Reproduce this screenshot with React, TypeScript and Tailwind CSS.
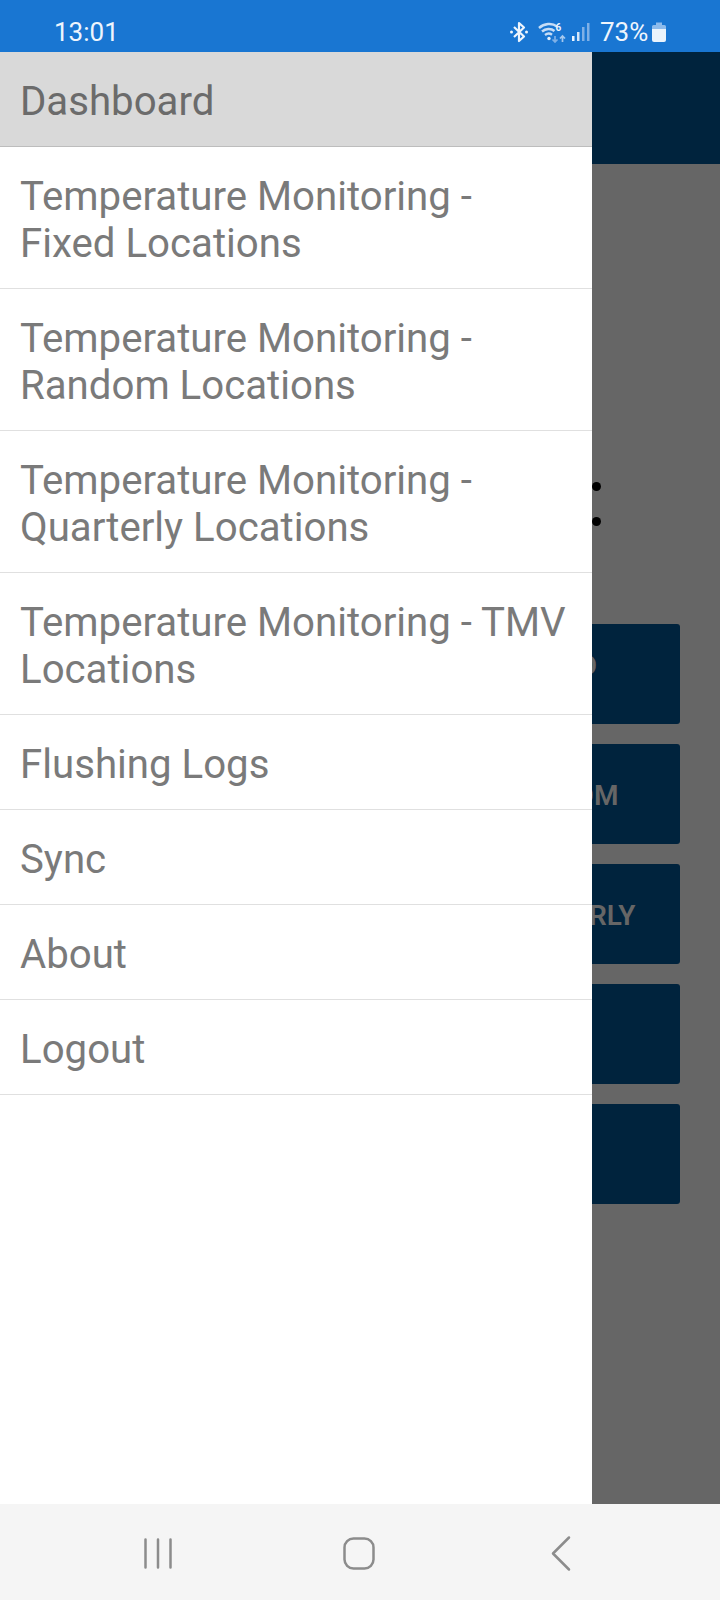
const menuItems = [
  { lines: ["Temperature Monitoring -", "Fixed Locations"] },
  { lines: ["Temperature Monitoring -", "Random Locations"] },
  { lines: ["Temperature Monitoring -", "Quarterly Locations"] },
  { lines: ["Temperature Monitoring - TMV", "Locations"] },
  { lines: ["Flushing Logs"] },
  { lines: ["Sync"] },
  { lines: ["About"] },
  { lines: ["Logout"] },
];

const backgroundButtons = [
  "TEMPERATURE MONITORING - FIXED",
  "TEMPERATURE MONITORING - RANDOM",
  "TEMPERATURE MONITORING - QUARTERLY",
  "",
  "",
];

function StatusIcons() {
  return (
    <div className="flex items-center">
      {/* bluetooth */}
      <svg width="20" height="22" viewBox="0 0 20 22" className="ml-[509px]">
        <path d="M5 6l10 9.5L10 20V2l5 4.5L5 16" fill="none" stroke="#eef5fd" strokeWidth="2.2" strokeLinejoin="round" />
        <circle cx="2.5" cy="11" r="1.5" fill="#eef5fd" />
        <circle cx="17.5" cy="11" r="1.5" fill="#eef5fd" />
      </svg>
      {/* wifi with 6 and arrows */}
      <svg width="30" height="22" viewBox="0 0 30 22" className="ml-[9px]">
        <path d="M1 7C6 2.500 14 1.500 19 5.500" fill="none" stroke="#c6ddf6" strokeWidth="2.400" />
        <path d="M4 10.500c3.500-3 9-3.500 12.500-.5" fill="none" stroke="#c6ddf6" strokeWidth="2.400" />
        <path d="M7 14c2-1.500 5-1.700 7-.2" fill="none" stroke="#c6ddf6" strokeWidth="2.400" />
        <circle cx="11" cy="17.500" r="1.700" fill="#e4effb" />
        <path d="M17 15v6M14.500 18.500l2.500 2.500 2.500-2.500" fill="none" stroke="#7fb0e6" strokeWidth="1.700" />
        <path d="M24.500 21v-6M22 17.500l2.500-2.500 2.500 2.500" fill="none" stroke="#a5c8ee" strokeWidth="1.700" />
        <text x="17.500" y="9.500" fontSize="10" fontWeight="700" fill="#eef5fd" fontFamily="Roboto, sans-serif">6</text>
      </svg>
      {/* signal */}
      <svg width="18" height="20" viewBox="0 0 18 20" className="ml-[4px]">
        <rect x="0" y="14" width="2.500" height="5" fill="#eef5fd" />
        <rect x="5" y="10" width="2.500" height="9" fill="#d6e6f8" />
        <rect x="10" y="5" width="2.500" height="14" fill="#7fb0e6" />
        <rect x="15" y="1" width="2.500" height="18" fill="#7fb0e6" />
      </svg>
      <span className="ml-[10px] text-[26px] leading-none text-[#eef5fd]">73%</span>
      {/* battery */}
      <svg width="14" height="20" viewBox="0 0 14 20" className="ml-[4px]">
        <path d="M4 0.500h6v2.500h-6z" fill="#8dbbec" />
        <path d="M1.500 3h11a1.500 1.500 0 0 1 1.500 1.500V7H0V4.500A1.500 1.500 0 0 1 1.500 3z" fill="#8dbbec" />
        <path d="M0 7h14v11a2 2 0 0 1-2 2H2a2 2 0 0 1-2-2z" fill="#eaf3fc" />
      </svg>
    </div>
  );
}

export default function App() {
  return (
    <div className="flex h-[1600px] w-[720px] flex-col overflow-hidden bg-white font-['Roboto',sans-serif] antialiased">
      <div className="relative flex h-[52px] shrink-0 items-center bg-[#1976d2] pt-[12px]">
        <span className="absolute left-[54px] text-[26px] leading-none text-[#eef5fd]">13:01</span>
        <StatusIcons />
      </div>

      <div className="relative min-h-0 flex-1 bg-[#666666]">
        {/* page behind the drawer */}
        <div className="h-[112px] bg-[#00233d]" />
        <div className="ml-[592px] mt-[318px] flex flex-col gap-[26px]">
          <div className="h-[9px] w-[9px] rounded-full bg-black" />
          <div className="h-[9px] w-[9px] rounded-full bg-black" />
        </div>
        <div className="mx-10 mt-[98px] flex flex-col gap-5">
          {backgroundButtons.map((label, i) => (
            <div
              key={i}
              className={`flex h-[100px] items-center justify-center whitespace-nowrap rounded-[3px] bg-[#00233d] text-[28px] font-semibold text-[#666666] ${i === 0 ? "pb-4" : "pt-1"}`}
            >
              {label}
            </div>
          ))}
        </div>

        {/* drawer */}
        <div className="absolute inset-y-0 left-0 w-[592px] bg-white text-[40.2px] leading-[47px] text-[#7a7a7a]">
          <div className="flex h-[95px] items-center border-b border-[#bdbdbd] bg-[#d9d9d9] px-5 pt-1 text-[#6b6b6b]">
            Dashboard
          </div>
          {menuItems.map((item) => (
            <div key={item.lines[0] + item.lines[1]} className="border-b border-[#e0e0e0] px-5 pb-[21px] pt-[26px]">
              {item.lines.map((line) => (
                <div key={line} className="whitespace-nowrap">
                  {line}
                </div>
              ))}
            </div>
          ))}
        </div>
      </div>

      <div className="flex h-[96px] shrink-0 items-center bg-[#f5f5f5]">
        <svg width="720" height="96" viewBox="0 0 720 96" fill="none" stroke="#8c8c8c">
          <path d="M145.500 35.500v28M158 35.500v28M170.500 35.500v28" strokeWidth="2.500" strokeLinecap="round" />
          <rect x="344.500" y="34.500" width="29" height="30" rx="9" strokeWidth="2.500" />
          <path d="M569 33.500L553 49.500l16 16" strokeWidth="2.500" strokeLinecap="round" strokeLinejoin="round" />
        </svg>
      </div>
    </div>
  );
}
